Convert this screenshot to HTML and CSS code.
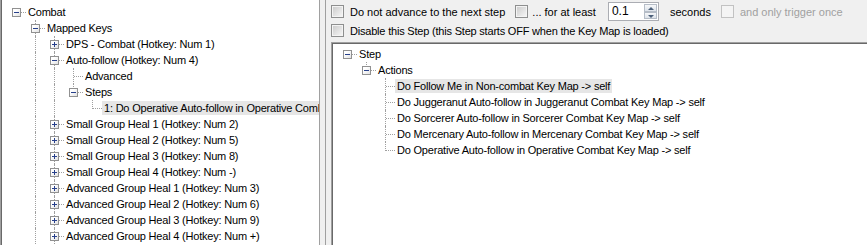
FILE: index.html
```html
<!DOCTYPE html>
<html lang="en">
<head>
    <meta charset="UTF-8">
    <title>Key Map Editor</title>
    <link rel="stylesheet" href="styles.css">
</head>
<body>
    <div class="window">
        <!-- Key map tree -->
        <div class="nav-tree">
            <div class="row"><span class="c n"><i class="box minus"></i></span><span class="label">Combat</span></div>
            <div class="row"><span class="c"></span><span class="c t"><i class="box minus"></i></span><span class="label">Mapped Keys</span></div>
            <div class="row"><span class="c"></span><span class="c v"></span><span class="c t"><i class="box plus"></i></span><span class="label">DPS - Combat (Hotkey: Num 1)</span></div>
            <div class="row"><span class="c"></span><span class="c v"></span><span class="c t"><i class="box minus"></i></span><span class="label">Auto-follow (Hotkey: Num 4)</span></div>
            <div class="row"><span class="c"></span><span class="c v"></span><span class="c v"></span><span class="c t"></span><span class="label">Advanced</span></div>
            <div class="row"><span class="c"></span><span class="c v"></span><span class="c v"></span><span class="c l"><i class="box minus"></i></span><span class="label">Steps</span></div>
            <div class="row"><span class="c"></span><span class="c v"></span><span class="c v"></span><span class="c"></span><span class="c l"></span><span class="label selected">1: Do Operative Auto-follow in Operative Combat Key Map -&gt; self</span></div>
            <div class="row"><span class="c"></span><span class="c v"></span><span class="c t"><i class="box plus"></i></span><span class="label">Small Group Heal 1 (Hotkey: Num 2)</span></div>
            <div class="row"><span class="c"></span><span class="c v"></span><span class="c t"><i class="box plus"></i></span><span class="label">Small Group Heal 2 (Hotkey: Num 5)</span></div>
            <div class="row"><span class="c"></span><span class="c v"></span><span class="c t"><i class="box plus"></i></span><span class="label">Small Group Heal 3 (Hotkey: Num 8)</span></div>
            <div class="row"><span class="c"></span><span class="c v"></span><span class="c t"><i class="box plus"></i></span><span class="label">Small Group Heal 4 (Hotkey: Num -)</span></div>
            <div class="row"><span class="c"></span><span class="c v"></span><span class="c t"><i class="box plus"></i></span><span class="label">Advanced Group Heal 1 (Hotkey: Num 3)</span></div>
            <div class="row"><span class="c"></span><span class="c v"></span><span class="c t"><i class="box plus"></i></span><span class="label">Advanced Group Heal 2 (Hotkey: Num 6)</span></div>
            <div class="row"><span class="c"></span><span class="c v"></span><span class="c t"><i class="box plus"></i></span><span class="label">Advanced Group Heal 3 (Hotkey: Num 9)</span></div>
            <div class="row"><span class="c"></span><span class="c v"></span><span class="c t"><i class="box plus"></i></span><span class="label">Advanced Group Heal 4 (Hotkey: Num +)</span></div>
        </div>

        <!-- Step editor -->
        <div class="editor">
            <div class="options">
                <div class="opt-row">
                    <label class="check first"><span class="tick"></span>Do not advance to the next step</label>
                    <label class="check narrow"><span class="tick"></span>... for at least</label>
                    <div class="spin">
                        <span class="spin-value">0.1</span>
                        <span class="spin-buttons">
                            <span class="spin-btn up"></span>
                            <span class="spin-btn down"></span>
                        </span>
                    </div>
                    <span class="unit">seconds</span>
                    <label class="check disabled"><span class="tick"></span>and only trigger once</label>
                </div>
                <div class="opt-row tight">
                    <label class="check"><span class="tick"></span>Disable this Step (this Step starts OFF when the Key Map is loaded)</label>
                </div>
            </div>
            <div class="step-tree">
                <div class="row"><span class="c n"><i class="box minus"></i></span><span class="label">Step</span></div>
                <div class="row"><span class="c"></span><span class="c l"><i class="box minus"></i></span><span class="label">Actions</span></div>
                <div class="row"><span class="c"></span><span class="c"></span><span class="c t"></span><span class="label selected">Do Follow Me in Non-combat Key Map -&gt; self</span></div>
                <div class="row"><span class="c"></span><span class="c"></span><span class="c t"></span><span class="label">Do Juggeranut Auto-follow in Juggeranut Combat Key Map -&gt; self</span></div>
                <div class="row"><span class="c"></span><span class="c"></span><span class="c t"></span><span class="label">Do Sorcerer Auto-follow in Sorcerer Combat Key Map -&gt; self</span></div>
                <div class="row"><span class="c"></span><span class="c"></span><span class="c t"></span><span class="label">Do Mercenary Auto-follow in Mercenary Combat Key Map -&gt; self</span></div>
                <div class="row"><span class="c"></span><span class="c"></span><span class="c l"></span><span class="label">Do Operative Auto-follow in Operative Combat Key Map -&gt; self</span></div>
            </div>
        </div>
    </div>
</body>
</html>
```

FILE: styles.css
```css
* {
    margin: 0;
    padding: 0;
    box-sizing: border-box;
}
body {
    width: 867px;
    height: 245px;
    overflow: hidden;
    background-color: #f0f0f0;
    color: #000000;
    font-family: 'Liberation Sans', Arial, sans-serif;
    font-size: 11px;
}
.window {
    display: flex;
    height: 245px;
}
/* Left tree */
.nav-tree {
    width: 320px;
    flex: none;
    background-color: #ffffff;
    border-left: 1px solid #a0a0a0;
    border-right: 1px solid #a0a0a0;
    box-shadow: inset 1px 0 0 #696969;
    padding: 4px 0 0 6px;
    overflow: hidden;
}
/* Tree rows */
.row {
    display: flex;
    height: 16px;
    white-space: nowrap;
    letter-spacing: -0.2px;
}
.c {
    position: relative;
    width: 19px;
    height: 16px;
    flex: none;
}
.c.v::before,
.c.t::before,
.c.l::before {
    content: "";
    position: absolute;
    left: 9px;
    top: 0;
    height: 16px;
    border-left: 1px dotted #a0a0a0;
}
.c.l::before {
    height: 9px;
}
.c.t::after,
.c.l::after,
.c.n::after {
    content: "";
    position: absolute;
    left: 10px;
    top: 8px;
    width: 9px;
    border-top: 1px dotted #a0a0a0;
}
.box {
    position: absolute;
    left: 5px;
    top: 4px;
    width: 9px;
    height: 9px;
    border: 1px solid #919191;
    background: linear-gradient(135deg, #ffffff 30%, #e2e2e2);
    z-index: 1;
}
.box::before {
    content: "";
    position: absolute;
    left: 1px;
    top: 3px;
    width: 5px;
    height: 1px;
    background-color: #27408b;
}
.box.plus::after {
    content: "";
    position: absolute;
    left: 3px;
    top: 1px;
    width: 1px;
    height: 5px;
    background-color: #27408b;
}
.label {
    height: 14px;
    line-height: 14px;
    margin-top: 1px;
    padding: 0 2px;
}
.label.selected {
    background-color: #e6e6e6;
}
/* Right side */
.editor {
    flex: 1;
    margin-left: 5px;
    border-left: 1px solid #a0a0a0;
    background-color: #f0f0f0;
    padding-left: 5px;
    display: flex;
    flex-direction: column;
    overflow: hidden;
}
.options {
    padding: 2px 0 2px;
}
.opt-row {
    display: flex;
    align-items: center;
    height: 19px;
    white-space: nowrap;
}
.opt-row.tight {
    letter-spacing: -0.2px;
}
.check {
    display: flex;
    align-items: center;
    gap: 6px;
}
.check.narrow {
    margin-left: 10px;
    gap: 4px;
}
.tick {
    width: 13px;
    height: 13px;
    border: 1px solid #8e8f8f;
    background: linear-gradient(135deg, #c9c9c9, #f8f8f8);
    box-shadow: inset 0 0 0 1px #f4f4f4;
}
.check.disabled {
    margin-left: 10px;
    color: #a0a0a0;
}
.check.disabled .tick {
    border-color: #c2c2c2;
    background: #f4f4f4;
    box-shadow: none;
}
.spin {
    display: flex;
    width: 51px;
    height: 19px;
    margin-left: 12px;
    border: 1px solid #abadb3;
    background-color: #ffffff;
}
.spin-value {
    flex: 1;
    padding-left: 3px;
    line-height: 16px;
    font-size: 12px;
}
.spin-buttons {
    display: flex;
    flex-direction: column;
    width: 14px;
    padding: 1px 1px 1px 0;
}
.spin-btn {
    flex: 1;
    position: relative;
    border: 1px solid #b6bdc7;
    background: linear-gradient(#f6f7f9, #dde3ea);
}
.spin-btn::after {
    content: "";
    position: absolute;
    left: 3px;
    border-left: 3px solid transparent;
    border-right: 3px solid transparent;
}
.spin-btn.up::after {
    top: 2px;
    border-bottom: 3px solid #4c607a;
}
.spin-btn.down::after {
    top: 2px;
    border-top: 3px solid #4c607a;
}
.unit {
    margin-left: 11px;
}
/* Step tree */
.step-tree {
    flex: 1;
    background-color: #ffffff;
    border-top: 1px solid #a0a0a0;
    border-left: 1px solid #a0a0a0;
    box-shadow: inset 1px 1px 0 #696969;
    padding: 3px 0 0 6px;
}
```
